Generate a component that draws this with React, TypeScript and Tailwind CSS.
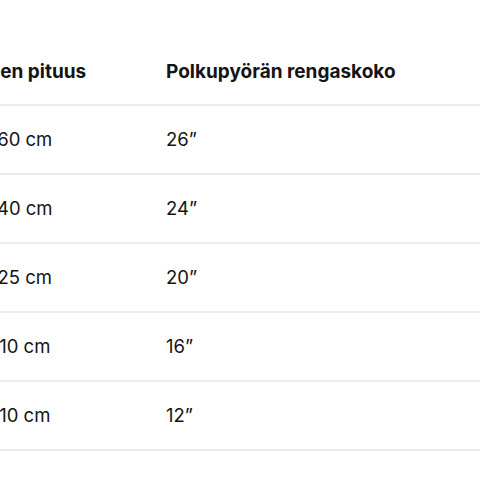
const rows = [
  { height: "160 cm", wheel: "26”" },
  { height: "140 cm", wheel: "24”" },
  { height: "125 cm", wheel: "20”" },
  { height: "110 cm", wheel: "16”" },
  { height: "110 cm", wheel: "12”" },
]

export default function App() {
  return (
    <div className="w-[480px] h-[480px] bg-white overflow-hidden pt-[40px] font-['Inter',sans-serif] text-[#141414]">
      <div className="ml-[-59px] w-[560px]">
        {/* Header */}
        <div className="flex items-center h-[66px] border-b-2 border-[#ececec] text-[19px] font-bold">
          <div className="w-[160px] text-center">Lapsen pituus</div>
          <div className="pl-[65px]">Polkupyörän rengaskoko</div>
        </div>

        {/* Rows */}
        {rows.map((r, i) => (
          <div key={i} className="flex items-center h-[69px] border-b-2 border-[#ececec] text-[18.5px]">
            <div className="w-[160px] text-center">{r.height}</div>
            <div className="pl-[65px]">{r.wheel}</div>
          </div>
        ))}
      </div>
    </div>
  )
}
